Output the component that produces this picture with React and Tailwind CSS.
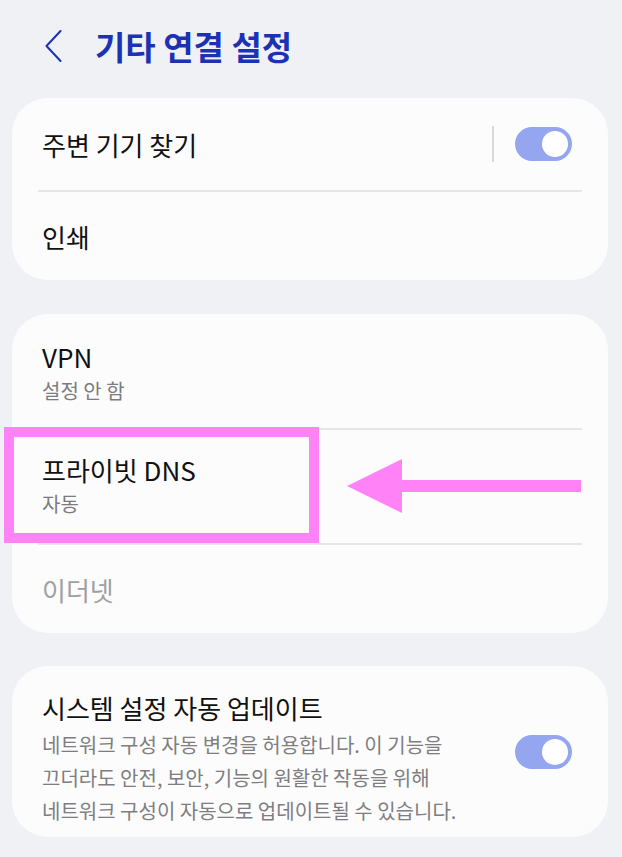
function Toggle() {
  return (
    <div className="w-[57px] h-[34px] rounded-full bg-[#94a6ef] flex items-center justify-end pr-[4px] shrink-0">
      <div className="w-[26px] h-[26px] rounded-full bg-white" />
    </div>
  )
}

function Divider() {
  return <div className="mx-[26px] h-[2px] bg-[#e6e6e8]" />
}

function App() {
  return (
    <div className="relative min-h-[857px] bg-[#f0f1f5] font-['Noto_Sans_CJK_KR','Noto_Sans',sans-serif] text-[#111111]">
      <header className="h-[98px] flex items-center pb-[6px]">
        <svg className="ml-[45px]" width="17" height="32" viewBox="0 0 17 32" fill="none">
          <polyline points="15.5,1 1.5,16 15.5,31" stroke="#1c32b5" strokeWidth="2" strokeLinecap="round" strokeLinejoin="round" />
        </svg>
        <h1 className="ml-[33px] text-[33px] leading-[40px] font-bold text-[#1c32b5]">기타 연결 설정</h1>
      </header>

      <main className="pl-[12px] pr-[14px] flex flex-col gap-[34px]">
        <section className="rounded-[36px] bg-[#fcfcfd]">
          <div className="h-[92px] flex items-center pl-[30px] pr-[36px]">
            <span className="flex-1 text-[26px]">주변 기기 찾기</span>
            <div className="w-[2px] h-[36px] bg-[#d9d9db] mr-[21px]" />
            <Toggle />
          </div>
          <Divider />
          <div className="h-[88px] flex items-center pl-[30px]">
            <span className="text-[26px]">인쇄</span>
          </div>
        </section>

        <section className="rounded-[36px] bg-[#fcfcfd]">
          <div className="h-[114px] flex flex-col pt-[26px] pl-[30px]">
            <span className="text-[26px] leading-[34px]">VPN</span>
            <span className="text-[20px] leading-[34px] text-[#7b7b7d]">설정 안 함</span>
          </div>
          <Divider />
          <div className="h-[113px] flex flex-col pt-[23px] pl-[30px]">
            <span className="text-[26px] leading-[34px]">프라이빗 DNS</span>
            <span className="text-[20px] leading-[34px] text-[#7b7b7d]">자동</span>
          </div>
          <Divider />
          <div className="h-[88px] flex items-center pl-[30px]">
            <span className="text-[26px] text-[#a0a0a2]">이더넷</span>
          </div>
        </section>

        <section className="-mt-[1px] rounded-[36px] bg-[#fcfcfd] h-[171px] flex items-center pl-[30px] pr-[36px]">
          <div className="flex-1 self-start pt-[25px]">
            <p className="text-[26px] leading-[34px]">시스템 설정 자동 업데이트</p>
            <p className="mt-[3px] text-[20px] leading-[33px] text-[#7e7e80] whitespace-nowrap">
              네트워크 구성 자동 변경을 허용합니다. 이 기능을
              <br />
              끄더라도 안전, 보안, 기능의 원활한 작동을 위해
              <br />
              네트워크 구성이 자동으로 업데이트될 수 있습니다.
            </p>
          </div>
          <Toggle />
        </section>
      </main>

      <div className="absolute left-[4px] top-[427px] w-[315px] h-[116px] border-[10px] border-[#ff82f6]" />
      <svg className="absolute left-[345px] top-[456px]" width="238" height="60" viewBox="0 0 238 60">
        <polygon points="2,30 57,3 57,57" fill="#ff82f6" />
        <rect x="56" y="24" width="180" height="12" fill="#ff82f6" />
      </svg>
    </div>
  )
}

export default App
